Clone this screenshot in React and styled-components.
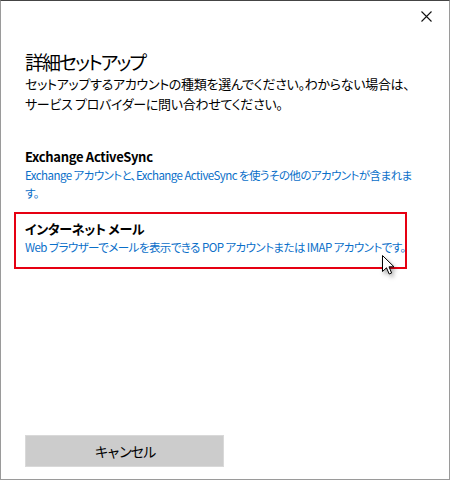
import React from 'react';
import styled, { createGlobalStyle } from 'styled-components';

const GlobalStyle = createGlobalStyle`
  html, body {
    margin: 0;
    padding: 0;
    background: #ffffff;
  }
  body {
    font-family: "Noto Sans CJK JP", "Noto Sans", sans-serif;
    font-feature-settings: "palt" 1;
  }
`;

const Window = styled.div`
  position: relative;
  width: 450px;
  height: 480px;
  box-sizing: border-box;
  border: 1px solid #9a9a9a;
  border-top-color: #444444;
  background: #ffffff;
  display: flex;
  flex-direction: column;
  overflow: hidden;
`;

const TitleBar = styled.div`
  height: 30px;
  display: flex;
  justify-content: flex-end;
  align-items: center;
`;

const CloseButton = styled.button`
  width: 46px;
  height: 30px;
  border: none;
  background: transparent;
  display: flex;
  align-items: center;
  justify-content: center;
  padding: 0;
  color: #111;
`;

const Content = styled.div`
  flex: 1;
  display: flex;
  flex-direction: column;
  padding: 0 24px 12px 24px;
`;

const Title = styled.h1`
  margin: 19px 0 0 0;
  font-size: 19px;
  line-height: 24px;
  font-weight: 400;
  letter-spacing: -2px;
  color: #000;
`;

const Lead = styled.p`
  margin: 0;
  font-size: 13px;
  line-height: 19.5px;
  letter-spacing: -0.3px;
  white-space: nowrap;
  color: #000;
`;

const Options = styled.div`
  margin: 27px 0 0 -11px;
  display: flex;
  flex-direction: column;
`;

const Option = styled.div`
  border: 2px solid ${p => (p.$selected ? '#e60012' : 'transparent')};
  padding: 6px 9px 11px 9px;
  margin-top: ${p => (p.$selected ? '-3px' : '0')};
  width: 393px;
  box-sizing: border-box;
`;

const OptionName = styled.div`
  font-size: 13px;
  line-height: 18px;
  font-weight: 700;
  letter-spacing: -0.3px;
  color: #000;
  white-space: nowrap;
`;

const OptionText = styled.div`
  font-size: 11.5px;
  line-height: 18px;
  letter-spacing: -0.55px;
  color: #0a6fc9;
  width: 390px;
`;

const Footer = styled.div`
  margin-top: auto;
`;

const CancelButton = styled.button`
  width: 199px;
  height: 32px;
  border: 1px solid #d9d9d9;
  background: #cccccc;
  font-family: inherit;
  font-size: 14px;
  letter-spacing: -2px;
  color: #000;
  padding: 0;
`;

const Cursor = styled.svg`
  position: absolute;
  left: 381px;
  top: 254px;
  filter: drop-shadow(2px 3px 2px rgba(0, 0, 0, 0.35));
`;

const options = [
  {
    id: 1,
    name: 'Exchange ActiveSync',
    text: 'Exchange アカウントと、Exchange ActiveSync を使うその他のアカウントが含まれます。',
  },
  {
    id: 2,
    name: 'インターネット メール',
    text: 'Web ブラウザーでメールを表示できる POP アカウントまたは IMAP アカウントです。',
    selected: true,
  },
];

export default function App() {
  return (
    <>
      <GlobalStyle />
      <Window>
        <TitleBar>
          <CloseButton aria-label="閉じる">
            <svg width="11" height="11" viewBox="0 0 11 11">
              <path d="M0.5 0.5 L10.5 10.5 M10.5 0.5 L0.5 10.5" stroke="#111" strokeWidth="1.1" fill="none" />
            </svg>
          </CloseButton>
        </TitleBar>
        <Content>
          <Title>詳細セットアップ</Title>
          <Lead>
            セットアップするアカウントの種類を選んでください。わからない場合は、
            <br />
            サービス プロバイダーに問い合わせてください。
          </Lead>
          <Options>
            {options.map(item => (
              <Option key={item.id} $selected={item.selected}>
                <OptionName>{item.name}</OptionName>
                <OptionText>{item.text}</OptionText>
              </Option>
            ))}
          </Options>
          <Footer>
            <CancelButton>キャンセル</CancelButton>
          </Footer>
        </Content>
        <Cursor width="14" height="21" viewBox="0 0 14 21">
          <path
            d="M0.5 0.5 L0.5 16.5 L4.5 12.8 L7.2 19 L9.6 18 L7 11.8 L12 11.8 Z"
            fill="#fff"
            stroke="#000"
            strokeWidth="1"
            strokeLinejoin="miter"
          />
        </Cursor>
      </Window>
    </>
  );
}
